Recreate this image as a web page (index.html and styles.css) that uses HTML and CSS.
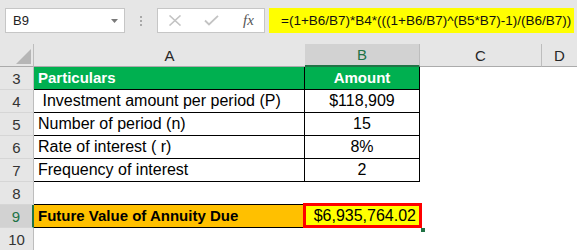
FILE: index.html
```html
<!DOCTYPE html>
<html>
<head>
<meta charset="utf-8">
<link rel="stylesheet" href="styles.css">
</head>
<body>
<div class="app">
  <div class="toolbar">
    <div class="namebox">
      <span class="name">B9</span>
      <svg class="caret" width="7" height="4" viewBox="0 0 7 4"><path d="M0 0H7L3.5 4Z" fill="#7a7a7a"/></svg>
    </div>
    <div class="grip"><i></i><i></i><i></i></div>
    <div class="fxbox">
      <svg class="ico" width="14" height="11" viewBox="0 0 14 11"><path d="M1.5 0.5L12.5 10.5M12.5 0.5L1.5 10.5" stroke="#c3c3c3" stroke-width="1.6" fill="none"/></svg>
      <svg class="ico" width="15" height="11" viewBox="0 0 15 11"><path d="M1 5.5L5 9.5L14 0.8" stroke="#c3c3c3" stroke-width="1.8" fill="none"/></svg>
      <span class="fx">fx</span>
    </div>
    <div class="formula">=(1+B6/B7)*B4*(((1+B6/B7)^(B5*B7)-1)/(B6/B7))</div>
  </div>
  <div class="sheet">
    <div class="corner"><span class="tri"></span></div>
    <div class="colh">A</div>
    <div class="colh sel">B</div>
    <div class="colh sep">C</div>
    <div class="colh">D</div>

    <div class="rowh">3</div>
    <div class="c a t green bold">Particulars</div>
    <div class="c b t green bold ctr">Amount</div>
    <div class="c"></div><div class="c"></div>

    <div class="rowh">4</div>
    <div class="c a t">&nbsp;Investment amount per period (P)</div>
    <div class="c b t ctr">$118,909</div>
    <div class="c"></div><div class="c"></div>

    <div class="rowh">5</div>
    <div class="c a t">Number of period (n)</div>
    <div class="c b t ctr">15</div>
    <div class="c"></div><div class="c"></div>

    <div class="rowh">6</div>
    <div class="c a t">Rate of interest ( r)</div>
    <div class="c b t ctr">8%</div>
    <div class="c"></div><div class="c"></div>

    <div class="rowh">7</div>
    <div class="c a t">Frequency of interest</div>
    <div class="c b t ctr">2</div>
    <div class="c"></div><div class="c"></div>

    <div class="rowh">8</div>
    <div class="c a tb"></div>
    <div class="c"></div>
    <div class="c"></div><div class="c"></div>

    <div class="rowh active">9</div>
    <div class="c a t orange bold">Future Value of Annuity Due</div>
    <div class="c b yellow right selcell">$6,935,764.02</div>
    <div class="c"></div><div class="c"></div>

    <div class="rowh">10</div>
    <div class="c"></div>
    <div class="c"></div>
    <div class="c"></div><div class="c"></div>
  </div>
</div>
</body>
</html>
```
FILE: styles.css
```css
* { box-sizing: border-box; }
html, body { margin: 0; padding: 0; }
body {
  width: 577px;
  height: 250px;
  overflow: hidden;
  background: #ffffff;
  font-family: "Liberation Sans", Arial, sans-serif;
  color: #000;
}
.app { width: 577px; }

.toolbar {
  height: 44px;
  background: #e6e6e6;
  display: flex;
  align-items: flex-start;
  padding-top: 8px;
}
.namebox {
  margin-left: 5px;
  width: 120px;
  height: 25px;
  background: #fff;
  border: 1px solid #c6c6c6;
  display: flex;
  align-items: center;
  justify-content: space-between;
  padding: 0 6px 0 7px;
}
.name { font-size: 13px; color: #222; }
.caret { display: block; }
.grip {
  width: 32px;
  height: 25px;
  display: flex;
  flex-direction: column;
  align-items: center;
  justify-content: center;
  gap: 2px;
}
.grip i { display: block; width: 2px; height: 2px; background: #a8a8a8; }
.fxbox {
  width: 108px;
  height: 25px;
  background: #fff;
  border: 1px solid #c6c6c6;
  display: flex;
  align-items: center;
  padding-left: 10px;
}
.fxbox .ico { display: block; margin-right: 22px; }
.fxbox .ico + .ico { margin-right: 22px; }
.fx {
  font-family: "Liberation Serif", serif;
  font-style: italic;
  font-size: 15px;
  color: #555;
  margin-left: 2px;
}
.formula {
  margin-left: 4px;
  width: 305px;
  height: 25px;
  background: #ffff00;
  font-size: 13.5px;
  line-height: 25px;
  padding-left: 12px;
  white-space: nowrap;
  overflow: hidden;
  color: #111;
}

.sheet {
  display: grid;
  grid-template-columns: 34px 271px 115px 122px 1fr;
  grid-template-rows: 23px repeat(8, 23px);
}
.corner {
  background: #e6e6e6;
  border-right: 1px solid #bdbdbd;
  border-bottom: 1px solid #ababab;
  position: relative;
}
.tri {
  position: absolute;
  right: 2px;
  bottom: 2px;
  width: 0; height: 0;
  border-left: 15px solid transparent;
  border-bottom: 15px solid #b6b6b6;
}
.colh {
  background: #e6e6e6;
  border-bottom: 1px solid #ababab;
  font-size: 15px;
  color: #262626;
  display: flex;
  align-items: center;
  justify-content: center;
}
.colh.sel {
  background: #d2d2d2;
  color: #217346;
  border-bottom: 2px solid #217346;
  border-right: 1px solid #bdbdbd;
}
.colh.sep { border-right: 1px solid #bdbdbd; }
.rowh {
  background: #e6e6e6;
  border-right: 1px solid #bdbdbd;
  border-bottom: 1px solid #d6d6d6;
  font-size: 15px;
  color: #333;
  display: flex;
  align-items: center;
  justify-content: center;
}
.rowh.active {
  background: #d2d2d2;
  color: #217346;
  border-right: 2px solid #217346;
}
.c {
  font-size: 16px;
  line-height: 22px;
  white-space: nowrap;
  padding-left: 4px;
  padding-right: 4px;
}
.c.t { border-right: 1px solid #000; border-bottom: 1px solid #000; }
.c.tb { border-bottom: 1px solid #000; }
.bold { font-weight: bold; font-size: 15px; }
.green { background: #00b050; color: #fff; }
.orange { background: #ffc000; }
.yellow { background: #ffff00; }
.ctr { text-align: center; }
.right { text-align: right; padding-right: 4px; }
.selcell { position: relative; }
.selcell::after {
  content: "";
  position: absolute;
  top: -2px; left: -2px; right: -2px; bottom: 0;
  border: 3px solid #ff0000;
}
.selcell::before {
  content: "";
  position: absolute;
  right: -5px; bottom: -4px;
  width: 4px; height: 4px;
  background: #217346;
}
```
